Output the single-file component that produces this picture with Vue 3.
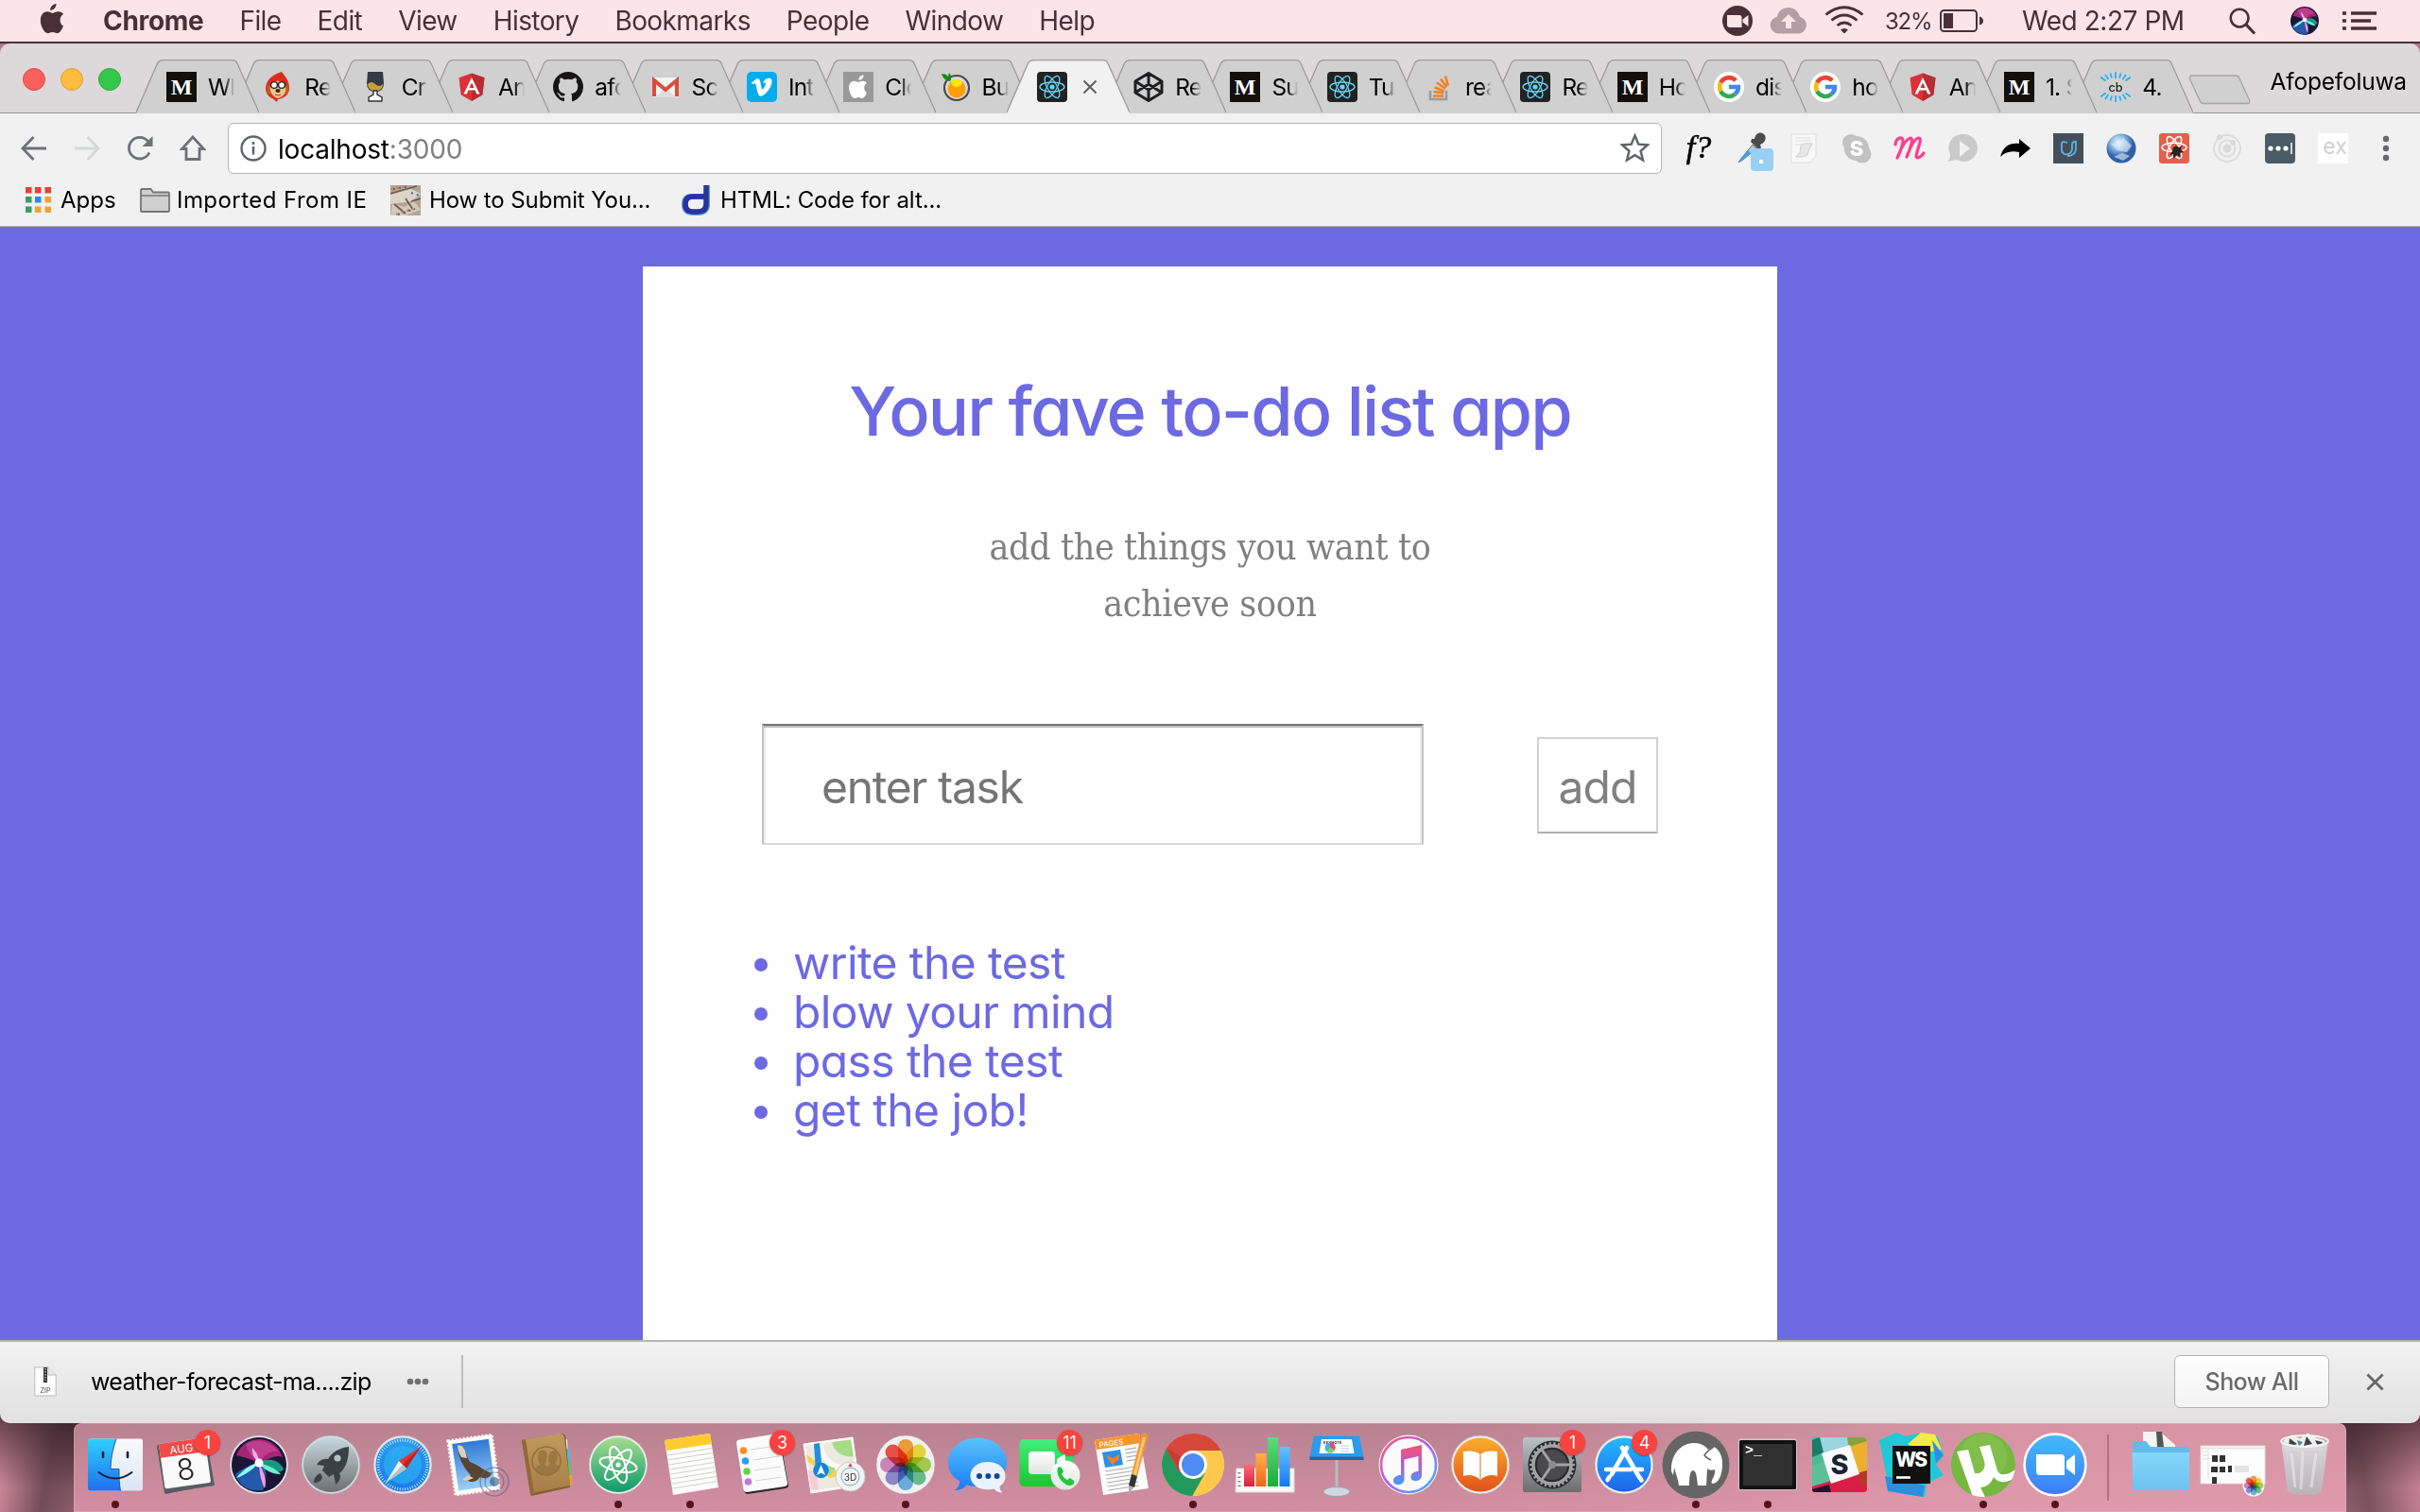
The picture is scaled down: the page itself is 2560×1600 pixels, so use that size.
<script setup>
const react = '<g fill="none" stroke="#61dafb" stroke-width="1.3"><ellipse cx="16" cy="16" rx="13" ry="5"/><ellipse cx="16" cy="16" rx="13" ry="5" transform="rotate(60 16 16)"/><ellipse cx="16" cy="16" rx="13" ry="5" transform="rotate(120 16 16)"/></g><circle cx="16" cy="16" r="2.6" fill="#61dafb"/>'

const fav = {
  medium: '<rect width="32" height="32" fill="#12100e"/><text x="16" y="24" text-anchor="middle" font-family="Liberation Serif, serif" font-weight="700" font-size="24" fill="#fff">M</text>',
  hound: '<path d="M20 0C10 3 3 9 3 18c0 5 4 9 7 10l5 4 1-3c8-1 12-6 12-12 0-7-4-12-8-17z" fill="#dd2c20"/><path d="M9 12c3-3 11-3 14 0 3 5 2 14-7 16-8-2-10-11-7-16z" fill="#f0c48f"/><path d="M7 15c-2 3-1 7 1 8M25 15c2 3 1 7-1 8" stroke="#b5651d" stroke-width="3" fill="none"/><circle cx="12" cy="14" r="3.4" fill="#fff" stroke="#222" stroke-width="1.4"/><circle cx="20" cy="14" r="3.4" fill="#fff" stroke="#222" stroke-width="1.4"/><ellipse cx="16" cy="20" rx="2.6" ry="2" fill="#3a2317"/><path d="M13 24q3 2 6 0" stroke="#a33" fill="none"/>',
  glass: '<path d="M8 0h16l1 12q0 9-9 9t-9-9z" fill="#333a44"/><path d="M8 13q4-4 8 0t8 0q0 7-8 7.500-8-1-8-7.500z" fill="#c6a03a"/><path d="M14 20h4v4l5 3v4H9v-4l5-3z" fill="#fff" stroke="#333" stroke-width="1.4"/>',
  angular: '<path d="M16 1.500l13.500 4.800-2.100 18L16 31 4.600 24.300l-2.100-18z" fill="#dd3139"/><path d="M16 1.500l13.500 4.800-2.100 18L16 31z" fill="#b52e31"/><path d="M16 6L7.500 23.500h3.200l1.700-4h7.200l1.700 4h3.200zm0 5.600l2.600 5.500h-5.200z" fill="#fff"/>',
  github: '<path transform="scale(2)" fill="#171515" d="M8 0C3.580 0 0 3.580 0 8c0 3.540 2.290 6.530 5.470 7.590.4.070.55-.17.55-.38 0-.19-.01-.82-.01-1.490-2.010.37-2.530-.49-2.690-.94-.09-.23-.48-.94-.82-1.130-.28-.15-.68-.52-.01-.53.63-.01 1.080.58 1.230.82.72 1.210 1.870.87 2.330.66.07-.52.28-.87.51-1.070-1.780-.2-3.640-.89-3.640-3.950 0-.87.31-1.590.82-2.150-.08-.2-.36-1.020.08-2.120 0 0 .67-.21 2.200.82.64-.18 1.320-.27 2-.27s1.360.09 2 .27c1.530-1.040 2.200-.82 2.200-.82.44 1.100.16 1.920.08 2.120.51.56.82 1.270.82 2.150 0 3.070-1.870 3.750-3.650 3.950.29.25.54.73.54 1.480 0 1.070-.01 1.930-.01 2.200 0 .21.15.46.55.38A8.010 8.010 0 0016 8c0-4.420-3.580-8-8-8z"/>',
  gmail: '<rect x="2" y="6" width="28" height="21" rx="2" fill="#f2f2f2"/><path d="M5 27l11-10 11 10z" fill="#ddd"/><path d="M4 26V9l12 10L28 9v17" fill="none" stroke="#dd4b3e" stroke-width="4"/>',
  vimeo: '<rect width="32" height="32" rx="5" fill="#00adef"/><path d="M5 11.500l5-4c3-1.500 4 1 4.600 4.500.7 4 1.200 6.500 2 6.500s3-3.500 3.200-5.200c.2-2-1.300-2-2.700-1.400 1.200-3.600 3.400-5.400 6.500-5.200 2.800.2 3.300 2.500 2.900 5-1 5.500-7.600 13.800-11.500 14-2.700 0-3.400-3.500-4.300-7-.8-3.500-1.200-6.500-2.200-6.500L6.300 13z" fill="#fff"/>',
  apple: '<rect width="32" height="32" fill="#999"/><path d="M21.500 3.500c.2 2.800-2.300 5.300-5 5.200-.3-2.700 2.300-5.200 5-5.200zM25 22c-1.500 3.200-3 6-5 6-1.500 0-2-.9-3.900-.9s-2.500.9-3.900.9c-2.700 0-6.200-6-6.200-11.200 0-4.500 2.800-7 5.600-7 1.800 0 3.200 1.200 4.400 1.200s2.800-1.300 5-1.200c1.600.1 3 .8 3.900 2.100-4 2.400-3.200 8.200.1 10.100z" fill="#fff"/>',
  bullet: '<circle cx="17" cy="17" r="13" fill="#d8d8d8" stroke="#4a4a4a" stroke-width="2.200"/><circle cx="17" cy="18" r="9.500" fill="#ff9e0c"/><ellipse cx="17" cy="12" rx="6" ry="4" fill="#ffe600"/><path d="M1 2q8 0 9 8Q3 9 1 2zM9 1q4 4 1 9-3-5-1-9z" fill="#138a13"/>',
  react: '<rect width="32" height="32" rx="4" fill="#222"/>' + react,
  codepen: '<path d="M16 1.500L30 10v12L16 30.500 2 22V10zM2 10l14 9 14-9M2 22l14-9 14 9M16 1.500V13M16 19v11.500" fill="none" stroke="#1e1f21" stroke-width="3" stroke-linejoin="round"/>',
  stack: '<path d="M7 20v9h17v-9" fill="none" stroke="#9a9c9f" stroke-width="2.600"/><path d="M10 25.500h11M10.300 21l10.800 1.500M11.500 16.500l10.200 4M14 11.500l9 6.200M18 7.500l6.500 8.500M23 4.500l3 10" stroke="#f48024" stroke-width="2.600"/>',
  google: '<circle cx="16" cy="16" r="16" fill="#fff"/><g fill="none" stroke-width="4.600"><path d="M23.200 9.200A9.900 9.900 0 0 0 7.200 11.500" stroke="#ea4335"/><path d="M7.200 11.500a9.900 9.900 0 0 0 0 9" stroke="#fbbc05"/><path d="M7.200 20.500a9.900 9.900 0 0 0 15.300 3" stroke="#34a853"/><path d="M22.500 23.500A9.500 9.500 0 0 0 25.900 16H16" stroke="#4285f4"/></g>',
  cb: '<g stroke="#1fb0f5" stroke-width="1.700"><path d="M16 0v7M10.500 1.500l1.500 5M21.500 1.500l-1.500 5M5 3l3.500 5M27 3l-3.500 5M0 5.500l5.500 4M32 5.500l-5.500 4M16 32v-7M10.500 30.500l1.500-5M21.500 30.500l-1.500-5M5 29l3.500-5M27 29l-3.500-5M0 26.500l5.500-4M32 26.500l-5.500-4"/></g><text x="16" y="20.500" text-anchor="middle" font-family="Inter, sans-serif" font-weight="500" font-size="12.500" fill="#222">cb</text>',
}

const tabs = [
  ['medium', 'Wh'], ['hound', 'Re'], ['glass', 'Cr'], ['angular', 'An'], ['github', 'afo'], ['gmail', 'Sc'], ['vimeo', 'Int'],
  ['apple', 'Clo'], ['bullet', 'Bu'], ['react', ''], ['codepen', 'Re'], ['medium', 'Su'], ['react', 'Tu'], ['stack', 'rea'],
  ['react', 'Re'], ['medium', 'Ho'], ['google', 'dis'], ['google', 'ho'], ['angular', 'An'], ['medium', '1. S'], ['cb', '4.'],
].map(([icon, label], i) => ({ icon, label, active: i === 9, z: i === 9 ? 40 : 30 - i }))

const menus = ['File', 'Edit', 'View', 'History', 'Bookmarks', 'People', 'Window', 'Help']

const extensions = [
  '<text x="17" y="26" text-anchor="middle" font-family="Liberation Serif, serif" font-style="italic" font-size="34" fill="#000" stroke="#000" stroke-width=".6">f?</text>',
  '<path d="M5 28L18 12l4 4L8 28l-5 3z" fill="#b9c4cc" stroke="#777"/><path d="M5 27l8-9 3 3-8 7-4 2z" fill="#3fa2e6"/><path d="M16 9l9 9 2-3-1-3c6-2 7-8 4-11-4-3-9-1-10 5h-3z" fill="#4b4b4b"/><rect x="16" y="16" width="24" height="24" rx="4" fill="#98cff5"/><rect x="25" y="28" width="4" height="4" fill="#fff"/>',
  '<path d="M3 1h26v23l-6 7H3z" fill="#f8f8f8" stroke="#ddd"/><path d="M7 5h17M7 8h17M7 12h10" stroke="#ddd"/><path d="M13 13q2-3 12-2-1 3-3 5l-2 7q-4 3-12 2 1-3 4-4z" fill="#e8e8e8" stroke="#cfcfcf"/>',
  '<circle cx="10" cy="10" r="9" fill="#c2c2c2"/><circle cx="22" cy="22" r="9.500" fill="#c2c2c2"/><circle cx="16" cy="16" r="13" fill="#c2c2c2"/><text x="16" y="24" text-anchor="middle" font-family="Inter, sans-serif" font-weight="800" font-size="22" fill="#fff">S</text>',
  '<path d="M1 12C2 4 9 3 9 8c0 6-4 14-6 18 4-10 9-20 14-21 4 0-1 13-4 20C17 14 22 5 26 5c5 1-6 20-2 21 3 0 5-2 7-5" fill="none" stroke="#ff3e8d" stroke-width="3.200" stroke-linecap="round" stroke-linejoin="round"/>',
  '<path d="M17 1a14.500 14.500 0 1 1-7 27L0 30q4-4 3-8A14.500 14.500 0 0 1 17 1z" fill="#c9c9c9"/><path d="M13 8l11 8-11 9z" fill="#f1f1f1"/>',
  '<path d="M0 25C3 14 10 10 20 11V6l12 10-12 10v-6C11 18 5 20 0 25z" fill="#000"/>',
  '<rect width="32" height="32" fill="#454f5b"/><path d="M15 10q-6-2-6 1v6c0 5 4 6 7 5 3-1 4-3 4-6v-5q0-2 4-2v7c0 6-5 8-9 8" fill="none" stroke="#5cb4e4" stroke-width="1.800"/>',
  '<defs><radialGradient id="gl" cx=".4" cy=".3"><stop offset="0" stop-color="#f0f8fd"/><stop offset=".5" stop-color="#8dbbe2"/><stop offset="1" stop-color="#2f5fa8"/></radialGradient></defs><circle cx="16" cy="16" r="15.500" fill="url(#gl)"/><path d="M4 10l8 2 6-7 9 8-5 7-10-2zM8 25l9-4 8 3-7 5z" fill="#e3eff9" opacity=".6"/>',
  '<rect width="32" height="32" rx="3" fill="#e2604c"/><g fill="none" stroke="#fff" stroke-width="1.500"><ellipse cx="16" cy="15" rx="13" ry="4.800"/><ellipse cx="16" cy="15" rx="13" ry="4.800" transform="rotate(60 16 15)"/><ellipse cx="16" cy="15" rx="13" ry="4.800" transform="rotate(120 16 15)"/></g><path d="M15 15q3-3 6 0l3-2-1 4 3 3-4 1 1 5-4-3-4 4v-5l-4 1 3-4z" fill="#2b2422"/>',
  '<circle cx="16" cy="16" r="14" fill="none" stroke="#dcdcdc" stroke-width="2"/><circle cx="16" cy="16" r="8.500" fill="none" stroke="#dcdcdc" stroke-width="2"/><circle cx="16" cy="16" r="4.500" fill="#d8d8d8"/><circle cx="8" cy="4" r="3" fill="#d8d8d8"/><circle cx="22" cy="10" r="3" fill="#d8d8d8"/>',
  '<rect width="32" height="32" rx="4" fill="#4b5b66"/><circle cx="6" cy="16" r="2.600" fill="#fff"/><circle cx="14" cy="16" r="2.600" fill="#fff"/><circle cx="22" cy="16" r="2.600" fill="#fff"/><path d="M28 10v12" stroke="#fff" stroke-width="1.500"/>',
  '<rect width="32" height="32" fill="#fff"/><text x="18" y="22" text-anchor="middle" font-family="Inter, sans-serif" font-size="23" fill="#d0d0d0">ex</text>',
]

const petals = (cx, cy, k) => ['#fb9a2d', '#f0e02c', '#a4d245', '#5fc28a', '#66aee6', '#8c83d0', '#d283c0', '#f4463c']
  .map((c, i) => `<rect x="${cx - 8 * k}" y="${cy - 27 * k}" width="${16 * k}" height="${27 * k}" rx="${8 * k}" fill="${c}" style="mix-blend-mode:multiply" opacity=".92" transform="rotate(${i * 45} ${cx} ${cy})"/>`).join('')
const ticks = (n, cx, cy, r1, r2, color, w) => Array.from({ length: n }, (_, i) => {
  const a = (i / n) * Math.PI * 2
  return `<path d="M${cx + r1 * Math.cos(a)} ${cy + r1 * Math.sin(a)}L${cx + r2 * Math.cos(a)} ${cy + r2 * Math.sin(a)}" stroke="${color}" stroke-width="${w}"/>`
}).join('')
const grad = (id, ...stops) => `<defs><linearGradient id="${id}" x1="0" y1="0" x2="0" y2="1">${stops.map((c, i) => `<stop offset="${i / (stops.length - 1)}" stop-color="${c}"/>`).join('')}</linearGradient></defs>`
const ring = (fill, rim = '#e6e6e8', r = 28.5) => `<circle cx="38" cy="44" r="31" fill="${rim}" stroke="#b79aa4" stroke-width=".6"/><circle cx="38" cy="44" r="${r}" fill="${fill}"/>`
const siri = (cx, cy, r) => `<g transform="translate(${cx} ${cy}) scale(${r / 29})"><circle r="29" fill="#1b1638"/><path d="M-24-10C-16-32 16-34 25-8 16-12 8-4 0-2-8-6-16-8-24-10z" fill="#d12c86" opacity=".75"/><path d="M-14-22C0-30 16-22 20-14 10-16 4-8 0-2-8-8-12-14-14-22z" fill="#e35bb0" opacity=".45"/><path d="M-25 10C-16 2-6 0 0-2 10 0 8 16 4 27-10 29-22 22-25 10z" fill="#2a70cf" opacity=".75"/><path d="M0-2C10-8 20-6 26 4 24 12 8 4 0-2z" fill="#1fc09c" opacity=".75"/><path d="M0-2C-6 4-12 10-24 14-16 4-6-2 0-2z" fill="#8bfbf5"/><path d="M0-2C8 0 18 4 23 10 12 10 4 4 0-2z" fill="#6ff0cf"/><path d="M0-2C4 6 9 16 6 25 2 18 0 6 0-2z" fill="#f79be6"/><path d="M0-2C-4-6-8-10-7-18-2-12 0-8 0-2z" fill="#f0b0e4"/><circle cy="-2" r="4.500" fill="#fff"/></g>`

const dock = [
  { run: true, svg: grad('fa', '#2fd0fd', '#1f6ff0') + grad('fb', '#fafafc', '#d9e6f5') + '<rect x="9" y="16.500" width="58" height="55" rx="2.500" fill="url(#fb)"/><path d="M11.500 16.500H39c-4 12-6 22-6 32h9c0 8 0 16 1.500 23h-32a2.500 2.500 0 0 1-2.500-2.500V19a2.500 2.500 0 0 1 2.500-2.500z" fill="url(#fa)"/><path d="M39 16.500c-4 12-6 22-6 32h9c0 8 0 16 1.500 23" fill="none" stroke="#1a4f96" stroke-width=".9"/><path d="M25 31v5M51 31v5" stroke="#14213a" stroke-width="2.600" stroke-linecap="round"/><path d="M20.500 52q17.500 13 35 0" fill="none" stroke="#14213a" stroke-width="2" stroke-linecap="round"/>' },
  { badge: '1', svg: '<path d="M6 24l6-3 48 42-5 4-40 8z" fill="#4c5258"/><path d="M6 24l8 50 53-8-8-46z" fill="#565d63"/><g transform="rotate(-8 38 42)"><rect x="11" y="18" width="49" height="48" rx="2" fill="#fafafa"/><path d="M11 33V20a2 2 0 0 1 2-2h45a2 2 0 0 1 2 2v13z" fill="#ee4c48"/><text x="34" y="30.500" text-anchor="middle" font-family="Inter, sans-serif" font-size="11.500" fill="#fff">AUG</text><text x="35.500" y="59.500" text-anchor="middle" font-family="Inter, sans-serif" font-weight="300" font-size="31" fill="#222">8</text></g>' },
  { svg: ring('#191a38') + siri(38, 44, 29) },
  { svg: grad('lp', '#c7d8df', '#6f6f70') + ring('url(#lp)', '#cfdde2', 29) + '<path d="M57 25c-10 1-18 6-22 13-5-1-9 1-12 6l8 1-2 5 7 7 5-3 2 11c5-4 6-8 4-12 7-5 10-15 10-28z" fill="#3b4044"/><circle cx="45" cy="37" r="3.600" fill="#b4c2c8"/><path d="M27 53c-5 2-7 6-7 10 5 0 8-2 9-6z" fill="#3b4044"/>' },
  { svg: grad('sf', '#2b9df2', '#1c7bea') + ring('url(#sf)') + '<circle cx="38" cy="44" r="20" fill="#30bdf2" opacity=".5"/>' + ticks(60, 38, 44, 24.5, 27.5, '#d8f0ff', 0.9) + '<path d="M57 25L34 40l8 8z" fill="#e8332f"/><path d="M20 63l14-23 8 8z" fill="#eceff2"/><path d="M57 25L38 44l4 4z" fill="#bb2420"/><path d="M20 63l18-19 4 4z" fill="#b9c0c8"/>' },
  { svg: grad('ml', '#2f78d8', '#9fd0f4') + '<g transform="rotate(-8 38 44)"><rect x="13.500" y="15" width="47" height="58" fill="#fff" stroke="#fff" stroke-width="2.600" stroke-dasharray="2.200 1.800"/><rect x="17.500" y="19" width="39" height="50" fill="url(#ml)"/></g><path d="M20 23l5 1 3 5c1 4 3 8 5 12l5 2c6 3 12 8 18 10-2 6-8 6-12 4-3 4-6 5-10 5l-6-2 6-5c-8-8-14-20-14-32z" fill="#5a4330"/><path d="M20 23l5 1 3 5 2 8-6-1c-3-5-4-9-4-13zM31 55l6 3-7 3-5-1z" fill="#d9cfc0"/><circle cx="59" cy="62" r="15" fill="none" stroke="#56657c" stroke-width="1.400" opacity=".6"/><circle cx="59" cy="62" r="10" fill="none" stroke="#56657c" stroke-width="1.200" opacity=".6"/><circle cx="59" cy="62" r="5" fill="#34517a" opacity=".6"/>' },
  { svg: grad('ct', '#c29a5e', '#a57d47') + '<path d="M54 18l6-1 1 22-5 1z" fill="#f3f3f3"/><path d="M56 28l7-1v14l-6 1z" fill="#4fb6dc"/><path d="M57 42l7-1v14l-6 1z" fill="#5bc467"/><path d="M58 56l7-1v10l-6 2z" fill="#eda42d"/><path d="M12 18L54 11q4 0 4.500 4L63 68 22 77z" fill="#83602f"/><path d="M14 17.500L52 11q4 0 5 4l6 51-40 8z" fill="url(#ct)"/><path d="M12 18l4-1 9 58-4 1z" fill="#8f6a38"/><circle cx="38" cy="40" r="15" fill="none" stroke="#93703c" stroke-width="1.600"/><path d="M26 50q1-5 6-6c-3-3-5-12 0-15 6-2 8 4 6 9 0 3-1 5-2 6l3 2 3-2c-3-4-3-14 3-15 5 0 7 8 2 14q4 1 5 5-12 11-26 2z" fill="#93703c" opacity=".75"/>' },
  { run: true, svg: grad('at', '#a7dc8f', '#0e9a6c') + ring('url(#at)', '#eef0ee', 29) + '<g fill="none" stroke="#fff" stroke-width="2"><ellipse cx="38" cy="44" rx="20" ry="7" transform="rotate(12 38 44)"/><ellipse cx="38" cy="44" rx="20" ry="7" transform="rotate(72 38 44)"/><ellipse cx="38" cy="44" rx="20" ry="7" transform="rotate(130 38 44)"/></g><circle cx="38" cy="44" r="2.600" fill="#fff"/>' },
  { run: true, svg: '<path d="M11 18l48-7 9 57-48 8z" fill="#fdfdfb"/><path d="M11 18l48-7 2 11-48 7z" fill="#fecb2f"/>' + [0, 1, 2, 3, 4, 5, 6, 7].map(i => `<path d="M${14 + i * 0.8} ${34 + i * 5}l47-7.500" stroke="#cfcfcf" stroke-width="1"/>`).join('') },
  { badge: '3', svg: '<path d="M12 22q0-3 3-3.500l38-6q3 0 4 3l9 50q0 3-3 3.500l-40 6q-3 0-3.500-3z" fill="#2a2a2e"/><path d="M11 21q0-3 3-3.500l38-6q3 0 4 3l9 49q0 3-3 3.500l-40 6q-3 0-3.500-3z" fill="#fbfbfb"/><path d="M26 28l28-4M28 39l28-4M30 50l28-4M31 61l28-4" stroke="#d4d4d4"/><circle cx="18.500" cy="29" r="3.800" fill="#fb8d25"/><circle cx="20.500" cy="40" r="3.800" fill="#22a4f3"/><circle cx="22" cy="51" r="3.800" fill="#63d543"/><circle cx="23.500" cy="62" r="3.800" fill="#c476e0"/>' },
  { svg: '<path d="M6 22l52-7 7 51-51 8z" fill="#f8f8f6" stroke="#fff"/><path d="M8 24l48-6.500 6.500 47-47.500 7z" fill="#ece9df"/><path d="M36 20l20-2.600 3 18C46 36 38 30 36 20z" fill="#a7dc87"/><path d="M26 22c4 18 14 24 35 23v8C38 56 24 40 20 22z" fill="#fbfaf5"/><path d="M9 33l24 18 29-5v6L34 58 10 40z" fill="#f9d04c"/><path d="M17 22l6-1 3 30h-7z" fill="#1f90dc"/><path d="M11 50h9l2 20-8 1z" fill="#f9cdd6"/><path d="M30 44l10 4-6 8z" fill="#a7dc87"/><circle cx="24.500" cy="50" r="8.300" fill="#1485d8"/><path d="M24.500 44l4.500 11-4.500-2.500-4.500 2.500z" fill="#fff"/><circle cx="55.500" cy="56.500" r="15.500" fill="#f3f3f3" stroke="#ccc"/><circle cx="55.500" cy="56.500" r="9.500" fill="none" stroke="#79a6bf"/><text x="55.500" y="60.500" text-anchor="middle" font-family="Inter, sans-serif" font-size="10" fill="#333">3D</text><path d="M55.500 42l2 4h-4z" fill="#e33"/>' },
  { run: true, svg: ring('#f0f0f1', '#fafafa', 30) + petals(38, 44, 1) },
  { svg: grad('ms', '#5ac2fb', '#1a7df8') + '<path d="M38 15.500c17 0 31 11 31 26S55 67 38 67c-4 0-8-.5-11-2-3 4-7 6-13 6 4-3 5-6 5-10C11 57 7 50 7 41.500c0-15 14-26 31-26z" fill="url(#ms)"/><path d="M49 41c11 0 18.500 6.500 18.500 15 0 5-2 8-6 11 0 3 1 5 3 6.500-4 0-7-1.500-9-4-2 .5-4 .8-6.500.8-11 0-18.500-6-18.500-14.500S38 41 49 41z" fill="#eaf3fc"/><circle cx="40" cy="56" r="3" fill="#12479a"/><circle cx="49.300" cy="56" r="3" fill="#12479a"/><circle cx="58.600" cy="56" r="3" fill="#12479a"/>' },
  { badge: '11', svg: grad('ft', '#43ef7e', '#1ac52c') + grad('fw', '#ffffff', '#dfe5df') + '<rect x="6.500" y="17" width="57" height="50" rx="5" fill="url(#ft)"/><rect x="16" y="30" width="28" height="24" rx="4" fill="url(#fw)"/><path d="M46 38l9-6v20l-9-6z" fill="#f3f3f3"/><circle cx="55" cy="55" r="15.500" fill="url(#fw)"/><path d="M47 47q3-2 5 2l1 2-2 3q2 4 6 6l3-2 4 3q1 3-2 4.500-5 2-11-4.500t-4-14z" fill="#1fc838"/>' },
  { svg: '<path d="M10 18l47-7 10 58-48 7z" fill="#fbfbfb"/><path d="M10 18l47-7 2 10-47 7z" fill="#f99527"/><text x="15" y="26" transform="rotate(-8 15 26)" font-family="Inter, sans-serif" font-size="8" font-weight="500" fill="#fff">PAGES</text><path d="M18 31l19-3 3 16-19 3z" fill="#2f8fe8"/><path d="M22 34l7 3 7-4-1 6-5 3v3l-3-3z" fill="#f58220"/>' + [0, 1, 2, 3].map(i => `<path d="M${42 + i * 0.7} ${28 + i * 4}l12-2" stroke="#888" stroke-width=".8"/>`).join('') + [0, 1, 2, 3, 4, 5].map(i => `<path d="M${21 + i * 0.7} ${51 + i * 4}l32-5" stroke="#999" stroke-width=".8"/>`).join('') + '<path d="M59 14q1-4 5-3 3 1 2 5L55 56l-6-2z" fill="#f0952d"/><path d="M61 15l3 0-10 40-3-1z" fill="#fcc67a"/><path d="M49 54l6 2-3 12-6-2z" fill="#333"/><path d="M46 66l5 2-5 8z" fill="#a9b0b8"/>' },
  { run: true, svg: '<circle cx="38" cy="44" r="33" fill="#fdc94c"/><path d="M38 44L9.400 27.500A33 33 0 0 1 67.500 29z" fill="#d6483c"/><path d="M38 11a33 33 0 0 1 29.500 18H38z" fill="#d6483c"/><path d="M9.400 27.500A33 33 0 0 0 37.500 77L51 53 38 44z" fill="#229a5b"/><path d="M9.400 27.500L23 52l15-8V29z" fill="#d6483c"/><path d="M10 26.500L24 51l7-12z" fill="#c13d33"/><path d="M38 29h29.500a33 33 0 0 1-30 48l14-25z" fill="#fdc94c"/><circle cx="38" cy="44" r="15" fill="#fff"/><circle cx="38" cy="44" r="12" fill="#4e8bf4"/>' },
  { svg: grad('nr', '#ff6b79', '#d6203c') + grad('no', '#ffb347', '#f0641d') + grad('ng', '#5fdc7e', '#17ad33') + grad('nb', '#5fc4ff', '#1479f2') + '<path d="M8 48h61v25H7z" fill="#f8f8f8" stroke="#ddd"/><path d="M11 52v18" stroke="#888" stroke-dasharray="1.500 3" stroke-width="3"/><rect x="16" y="44" width="11" height="23" fill="url(#nr)"/><rect x="28.500" y="32" width="11" height="35" fill="url(#no)"/><rect x="41" y="15" width="11" height="52" fill="url(#ng)"/><rect x="53.500" y="25" width="11" height="42" fill="url(#nb)"/>' },
  { svg: '<rect x="36.500" y="38" width="3" height="36" fill="#b9bcc2"/><ellipse cx="38" cy="72.500" rx="14" ry="5" fill="#cfd8e2" stroke="#9aa5b3"/><path d="M14 13.500h48l4.500 22h-57z" fill="#2b9ceb"/><path d="M9.500 35.500h57v3.500h-57z" fill="#1367b4"/><path d="M22 17h32l2.500 15h-37z" fill="#fff"/><text x="24" y="21.500" font-family="Inter, sans-serif" font-size="4" font-weight="700" fill="#333">KEYNOTE</text><circle cx="31" cy="26" r="5.500" fill="#3fb1f0"/><path d="M31 26v-5.500a5.500 5.500 0 0 1 5 8z" fill="#ef4c6a"/><path d="M31 26l5 2.500a5.500 5.500 0 0 1-9 1z" fill="#7bd653"/><path d="M42 24h9M42 27h9M42 30h9" stroke="#bcd" stroke-width="1.200"/>' },
  { svg: '<defs><linearGradient id="it" x1="0" y1="0" x2="1" y2="1"><stop offset="0" stop-color="#fb5a72"/><stop offset=".5" stop-color="#b55cf0"/><stop offset="1" stop-color="#30c3fb"/></linearGradient></defs>' + grad('iu', '#fb5268', '#b85ad8', '#3ba1f8') + '<circle cx="38" cy="44" r="31.500" fill="#f5f5f7"/><circle cx="38" cy="44" r="29" fill="#fbfbfd" stroke="url(#it)" stroke-width="2.600"/><path d="M30 28l22-5v32c0 4-3 6-6.500 6S40 59 40.500 56s4-5 8-5V35l-15 3.500V59c0 4-3 6-6.500 6S21.500 63 22 60s4-5 8-5z" fill="url(#iu)"/>' },
  { svg: grad('ib', '#fcae2d', '#e2501a') + ring('url(#ib)', '#ececec') + '<path d="M38 33c-5-4-12-4-18-3v26c6-2 13-1 18 4 5-5 12-6 18-4V30c-6-1-13-1-18 3z" fill="#fff"/><path d="M38 33v26" stroke="#e88a3a" stroke-width="1.200"/>' },
  { badge: '1', svg: grad('sp', '#b9c3c8', '#6d6d6e') + '<rect x="7" y="15" width="62" height="58" rx="2.500" fill="url(#sp)"/><circle cx="38" cy="44" r="25.500" fill="#2c2c2e"/><circle cx="38" cy="44" r="20" fill="none" stroke="#a3a3a6" stroke-width="3.500"/>' + ticks(30, 38, 44, 20, 24, '#a3a3a6', 2.2) + '<circle cx="38" cy="44" r="16" fill="#4a4a4c"/><path d="M38 44L27 28M38 44l19 0M38 44L27 60" stroke="#a3a3a6" stroke-width="3"/><circle cx="38" cy="44" r="4" fill="#8c8c8f"/>' },
  { badge: '4', svg: grad('as', '#27b9fb', '#1d63ec') + ring('url(#as)', '#eee') + '<g stroke="#fff" stroke-width="4.600" stroke-linecap="round"><path d="M41 26L25 54M36 26l18 31M19 49h26M50 49h7"/><path d="M22.500 57l-2 3M55 58l1.500 2.500"/></g>' },
  { run: true, svg: '<circle cx="38" cy="44" r="35.500" fill="#656565"/><path d="M12 51c-1-16 8-30 25-30 6 0 11 3 14 7l6-3c6 3 9 10 9 18 0 10-3 21-11 21-2-4 4-7 3-15-3 1-6 1-8-1l-1 18h-9c-1-6-1-16-5-16s-4 11-4 16H20c-1-7-3-12-5-19l-1 8z" fill="#fff"/><path d="M57 25c-3 2-8 5-10 9 2 3 5 4 7 5" fill="none" stroke="#656565" stroke-width="1.600"/>' },
  { run: true, svg: '<rect x="7" y="16.500" width="62" height="54.500" rx="2.500" fill="#c9c9c9"/><rect x="8" y="18" width="60" height="52" rx="1.500" fill="#111"/><rect x="12" y="22" width="52" height="44" fill="#303030"/><text x="14" y="33" font-family="Liberation Mono, monospace" font-weight="700" font-size="15" fill="#fff">&gt;_</text>' },
  { svg: '<rect x="9" y="15" width="58" height="58" rx="3" fill="#fff"/><path d="M12 15h35l5 16-43 14V18q0-3 3-3z" fill="#9ad5e0"/><path d="M9 15h7l15 54-12 4-7 0q-3 0-3-3z" fill="#3eb489" opacity=".85"/><path d="M9 18l8-3 4 16-12 5z" fill="#1c7a66"/><path d="M46 15h18q3 0 3 3v5l-19 6z" fill="#8aa03a"/><path d="M48 25l19-6v36l-10 3z" fill="#ecb02e"/><path d="M9 67l58-17v20q0 3-3 3H12q-3 0-3-3z" fill="#d81e46"/><path d="M9 70l18-5 2 8H12q-3 0-3-3z" fill="#2b0f2c"/><path d="M57 54l10-3v14l-6 2z" fill="#b33a25"/><path d="M19 32l30-9 10 31-30 10z" fill="#fafafa"/><text x="38" y="54" text-anchor="middle" font-family="Inter, sans-serif" font-weight="800" font-size="29" fill="#1c2330">S</text>' },
  { svg: '<path d="M4 18l18-8 10 4 12-3 22 3 6 20-8 10 8 11-18 9-2 14-37-6z" fill="#1fc9d6"/><path d="M10 56l42 10-2 12-37-6z" fill="#2a8fe0"/><path d="M34 22l14-12 15 2 7 16-10 2H46z" fill="#f4ea4a"/><path d="M60 18l12 16-8 8z" fill="#2f8fe0"/><rect x="18" y="24" width="40" height="40" fill="#101010"/><text x="38" y="46" text-anchor="middle" font-family="Inter, sans-serif" font-weight="800" font-size="21" fill="#fff" textLength="34">WS</text><path d="M22 57.500h15" stroke="#fff" stroke-width="2.600"/>' },
  { run: true, svg: '<clipPath id="utc"><circle cx="38" cy="44" r="34"/></clipPath><circle cx="38" cy="44" r="34" fill="#76b740"/><circle cx="38" cy="36" r="25" fill="#8cc557" opacity=".5"/><path clip-path="url(#utc)" d="M10 30l12-2 7 25c8 1 12-5 10-13l-5-15 11-2 7 24c1 5 4 8 8 7 4 0 8-2 12-5v8c-7 6-17 8-23 0-3 7-8 11-14 11l6 12-14-2z" fill="#fff"/>' },
  { run: true, svg: grad('zm', '#42bbfd', '#3d7ef8') + ring('url(#zm)', '#fff', 31) + '<circle cx="38" cy="44" r="32.500" fill="none" stroke="#fff" stroke-width="2.400"/><path d="M18 33h26q4 0 4 4v18H22q-4 0-4-4z" fill="#fff"/><path d="M50 40l9-7v22l-9-7z" fill="#fff"/>' },
]

const stacks = [
  grad('fo', '#86d6fb', '#6cc3ee') + '<path d="M19 9h18l16 14v14H19z" fill="#f4f4f4"/><path d="M33 9h6l2 16h-7z" fill="#555"/><path d="M8 23q0-4 4-4h10l5 6h36q5 0 5 5v39q0 2-2 2H10q-2 0-2-2z" fill="#61bce9"/><path d="M7.500 31h60.500v38q0 2-2 2H10q-2 0-2-2z" fill="url(#fo)"/>',
  '<rect x="4" y="24" width="68" height="40" fill="#fdfdfd" stroke="#ddd"/><path d="M4 26.500h68" stroke="#e5e5e5" stroke-width="2"/><path d="M12 28v30M6 30h5M6 34h5M6 38h5" stroke="#ddd"/><g fill="#333"><rect x="16" y="34" width="6" height="7"/><rect x="24" y="34" width="6" height="7"/><rect x="15" y="46" width="7" height="6"/><rect x="24" y="46" width="6" height="6"/><rect x="33" y="45" width="4" height="7"/><rect x="16" y="57" width="5" height="7"/></g><rect x="40" y="45" width="15" height="7" fill="#e4e4e4"/><circle cx="60" cy="66" r="11.500" fill="#f3f3f3"/>' + petals(60, 66, 0.38),
  grad('tr', '#dcdcde', '#b9b5b8') + '<path d="M15 18l10-6 8 4 8-6 9 5 10 3-3 12H18z" fill="#efefef" stroke="#aaa" stroke-width=".8"/><path d="M22 16l8 6-9 3zM40 14l6 8-9 2zM49 18l8 2-4 6z" fill="#444"/><path d="M30 18l6 2-4 5z" fill="#3f9b8c"/><path d="M13 18c14 8 37 8 50 0l-7 54c-4 5-32 5-36 0z" fill="url(#tr)" opacity=".92"/><ellipse cx="38" cy="19" rx="25" ry="6" fill="none" stroke="#f6f6f6" stroke-width="1.800"/><path d="M24 32l4 36M36 30l-2 40M50 32l-5 36" stroke="#f3f1f2" stroke-width="3" opacity=".5"/>',
]

const menuSiri = siri(16, 16, 15)
const todos = ['write the test', 'blow your mind', 'pass the test', 'get the job!']
</script>

<template>
  <div class="screen">
    <header class="menubar">
      <svg class="apple" viewBox="0 0 26 32"><path d="M17.500 0c.3 3.500-3 7-6.300 6.900C10.800 3.500 14.200.2 17.500 0zM25 23.500c-1.800 4.300-4 7.700-6.400 7.700-2 0-2.600-1.200-5-1.200s-3.100 1.200-5 1.200C5 31.200.8 24 .8 17.600.8 11.500 4.500 8.300 8.200 8.300c2.300 0 4.200 1.600 5.600 1.600s3.500-1.700 6.300-1.600c2.100.1 3.800 1 4.900 2.700-5 3.100-4.200 10.200 0 12.500z" fill="#4a2f38" /></svg>
      <nav class="menus">
        <b>Chrome</b>
        <span v-for="m in menus" :key="m">{{ m }}</span>
      </nav>
      <div class="status">
        <svg class="s-zoom" viewBox="0 0 32 32"><circle cx="16" cy="16" r="16" fill="#4a2f38" /><path d="M5 10h13q2.500 0 2.500 2.500V23H8q-3 0-3-3zM21.500 14.500l6-4.500v12l-6-4.500z" fill="#fde4ea" /></svg>
        <svg class="s-cloud" viewBox="0 0 40 28"><path d="M9 27.500a9 9 0 0 1-1-17.800C9 3.500 14 0 20 0s10.500 3.600 12 9.800A9 9 0 0 1 31 27.500z" fill="#b69da5" /><path d="M20 7l8 8h-5v7h-6v-7h-5z" fill="#fde4ea" /></svg>
        <svg class="s-wifi" viewBox="0 0 42 30"><g fill="none" stroke="#4a2f38" stroke-width="2.800"><path d="M1.500 9.500Q21-6 40.500 9.500" /><path d="M7.500 15.500Q21 4.500 34.500 15.500" /><path d="M13.500 21Q21 15 28.500 21" /></g><path d="M17 25.500Q21 22.500 25 25.500L21 29.500z" fill="#4a2f38" /></svg>
        <span class="pct">32%</span>
        <svg class="s-batt" viewBox="0 0 46 24"><rect x="1" y="1" width="38" height="22" rx="3.500" fill="none" stroke="#4a2f38" stroke-width="2" /><rect x="4" y="4" width="10" height="16" fill="#4a2f38" /><path d="M42 7.500q4 1 4 4.500t-4 4.500z" fill="#4a2f38" /></svg>
        <span class="clock">Wed 2:27 PM</span>
        <svg class="s-search" viewBox="0 0 30 30"><circle cx="11.500" cy="11.500" r="9.700" fill="none" stroke="#4a2f38" stroke-width="2.600" /><path d="M18.500 18.500L28 28.500" stroke="#4a2f38" stroke-width="3.200" /></svg>
        <svg class="s-siri" viewBox="0 0 32 32" v-html="menuSiri"></svg>
        <svg class="s-list" viewBox="0 0 36 20"><path d="M0 2h4M0 10h4M0 18h4M9 2h27M9 10h21M9 18h27" stroke="#4a2f38" stroke-width="3.600" /></svg>
      </div>
    </header>

    <section class="window">
      <div class="tabstrip">
        <div class="lights"><i class="red"></i><i class="amber"></i><i class="green"></i></div>
        <div class="tabs">
          <div v-for="(t, i) in tabs" :key="i" class="tab" :style="{ zIndex: t.z }">
            <svg class="tabshape" viewBox="0 0 130 57">
              <path d="M0 57L22.500 4Q24.500.7 28 .7H102Q105.500.7 107 4L130 57z" :fill="t.active ? '#f1f1f1' : '#d0d0d0'" />
              <path d="M0 56L22.500 4Q24.500.7 28 .7H102Q105.500.7 107 4L130 56" fill="none" stroke="#9b9b9b" stroke-width="1.300" />
            </svg>
            <svg class="favicon" viewBox="0 0 32 32" v-html="fav[t.icon]"></svg>
            <svg v-if="t.active" class="close" viewBox="0 0 16 16"><path d="M1.500 1.500l13 13M14.500 1.500l-13 13" stroke="#5f5f5f" stroke-width="2" /></svg>
            <span v-else class="tablabel">{{ t.label }}</span>
          </div>
        </div>
        <svg class="newtab" viewBox="0 0 66 32"><path d="M4 1h46q3 0 4 3l10.500 23q1 3.500-2 3.500H16q-3 0-4-3L1.500 4.500Q.8 1 4 1z" fill="#d0d0d0" stroke="#a5a5a5" stroke-width="1.300" /></svg>
        <span class="profile">Afopefoluwa</span>
      </div>

      <div class="toolbar">
        <svg class="nav-icon" viewBox="0 0 28 28"><path d="M27 14H2M13.500 2L2 14l11.500 12" fill="none" stroke="#6e7175" stroke-width="2.800" /></svg>
        <svg class="nav-icon" viewBox="0 0 28 28"><path d="M1 14h25M14.500 2L26 14 14.500 26" fill="none" stroke="#d6d7d8" stroke-width="2.800" /></svg>
        <svg class="nav-icon" viewBox="0 0 28 28"><path d="M24 18.500A11.300 11.300 0 1 1 22.500 6.500" fill="none" stroke="#6e7175" stroke-width="2.800" /><path d="M27.500 1v11H16.500z" fill="#6e7175" /></svg>
        <svg class="nav-icon" viewBox="0 0 28 28"><path d="M14 2L2.500 14.500H7V25.500H21V14.500h4.500z" fill="none" stroke="#6e7175" stroke-width="2.800" /></svg>
        <div class="omnibox">
          <svg class="info" viewBox="0 0 28 28"><circle cx="14" cy="14" r="12.500" fill="none" stroke="#616468" stroke-width="2.400" /><path d="M14 12v8.500M14 7v3" stroke="#616468" stroke-width="2.600" /></svg>
          <span class="url">localhost<em>:3000</em></span>
          <svg class="star" viewBox="0 0 30 30"><path d="M15 2.500l3.700 8.800 9.300.7-7.100 6.200 2.300 9.300L15 22.500l-8.200 5 2.300-9.300L2 12l9.300-.7z" fill="none" stroke="#616468" stroke-width="2.400" /></svg>
        </div>
        <div class="extensions">
          <svg v-for="(e, i) in extensions" :key="i" viewBox="0 0 32 32" v-html="e"></svg>
          <svg viewBox="0 0 32 32"><g fill="#66696d"><circle cx="16" cy="6" r="3.200" /><circle cx="16" cy="16" r="3.200" /><circle cx="16" cy="26" r="3.200" /></g></svg>
        </div>
      </div>

      <div class="bookmarks">
        <svg class="apps" viewBox="0 0 27 27"><g fill="#ea3f38"><rect width="6.500" height="6.500" /><rect x="10" width="6.500" height="6.500" /><rect x="20.500" width="6.500" height="6.500" /></g><g fill="#35a160"><rect y="10" width="6.500" height="6.500" /><rect y="20.500" width="6.500" height="6.500" /></g><rect x="10" y="10" width="6.500" height="6.500" fill="#2f86f2" /><g fill="#eda32f"><rect x="20.500" y="10" width="6.500" height="6.500" /><rect x="10" y="20.500" width="6.500" height="6.500" /><rect x="20.500" y="20.500" width="6.500" height="6.500" /></g></svg>
        <span class="b1">Apps</span>
        <svg class="folder" viewBox="0 0 32 26"><path d="M1 24V2.500Q1 1 2.500 1h9L14 4.500h16q1 0 1 1.500v18q0 1-1 1H2q-1 0-1-1z" fill="#cfcfcf" stroke="#757575" stroke-width="1.800" /><path d="M1 8h30" stroke="#757575" stroke-width="1.600" /></svg>
        <span class="b2">Imported From IE</span>
        <svg class="photo" viewBox="0 0 32 32"><rect width="32" height="32" fill="#b3a596" /><path d="M0 9L20 3l12 6-9 8-23 3z" fill="#ddd4c8" /><path d="M2 20l13 3 10-6 7 9-16 6H0z" fill="#d3c9bb" /><path d="M0 9L28 1M4 20l12 10M16 14l8 12M22 17l10-3" stroke="#6f5b50" stroke-width="1.800" /><path d="M0 4l18-3M6 31l18-6" stroke="#d9824e" stroke-width="2.400" stroke-dasharray="3 3" /><path d="M3 4l18-3M8 31l18-6M22 8l9 3" stroke="#54657e" stroke-width="2" stroke-dasharray="2 4" /></svg>
        <span class="b3">How to Submit You...</span>
        <svg class="dlogo" viewBox="0 0 32 32"><path d="M27 0v20q0 9-10 9H12Q3 29 3 20t9-8h15" fill="none" stroke="#5f9bd6" stroke-width="6" /><path d="M26 0v20q0 8-9 8h-5q-8 0-8-8t8-8h14" fill="none" stroke="#27349b" stroke-width="5.500" /></svg>
        <span class="b4">HTML: Code for alt...</span>
      </div>

      <main class="page">
        <div class="card">
          <h1>Your fave to-do list app</h1>
          <p>add the things you want to<br>achieve soon</p>
          <div class="form">
            <div class="field">enter task</div>
            <button type="button">add</button>
          </div>
          <ul>
            <li v-for="t in todos" :key="t">{{ t }}</li>
          </ul>
        </div>
      </main>

      <footer class="downloads">
        <svg class="zip" viewBox="0 0 24 32"><path d="M.8.800H15L23.200 9v22H.8z" fill="#fdfdfd" stroke="#bbb" stroke-width="1" /><path d="M15 .8V9h8" fill="#e9e9e9" stroke="#bbb" /><rect x="10" y="1" width="4" height="16" fill="#333" /><path d="M12 2v13" stroke="#bbb" stroke-dasharray="1.500 1.500" stroke-width="1.500" /><text x="12" y="27.500" text-anchor="middle" font-family="Inter, sans-serif" font-size="7" fill="#444">ZIP</text></svg>
        <span class="fname">weather-forecast-ma....zip</span>
        <svg class="dots" viewBox="0 0 24 8"><g fill="#707070"><circle cx="4" cy="4" r="3.300" /><circle cx="12" cy="4" r="3.300" /><circle cx="20" cy="4" r="3.300" /></g></svg>
        <i class="rule"></i>
        <button type="button" class="showall">Show All</button>
        <svg class="dismiss" viewBox="0 0 20 20"><path d="M1.500 1.500l17 17M18.500 1.500l-17 17" stroke="#666" stroke-width="3" /></svg>
      </footer>
    </section>

    <div class="desktop">
      <div class="dock">
        <div v-for="(d, i) in dock" :key="i" class="cell">
          <svg viewBox="0 0 76 94" v-html="d.svg"></svg>
          <i v-if="d.run" class="running"></i>
          <span v-if="d.badge" class="badge">{{ d.badge }}</span>
        </div>
        <div class="divider"></div>
        <div v-for="(s, i) in stacks" :key="'s' + i" class="cell">
          <svg viewBox="0 0 76 94" v-html="s"></svg>
        </div>
      </div>
    </div>
  </div>
</template>

<style>
body {
  background: #3c2a32;
}
</style>

<style scoped>
* {
  box-sizing: border-box;
}
svg {
  display: block;
  flex: none;
}
.screen {
  width: 2560px;
  height: 1600px;
  overflow: hidden;
  display: flex;
  flex-direction: column;
  background: #b0788a;
  font-family: Inter, "Liberation Sans", sans-serif;
  white-space: nowrap;
}
.menubar {
  height: 46px;
  flex: none;
  display: flex;
  align-items: center;
  padding: 0 46px 0 42px;
  background: #fde4ea;
  border-bottom: 2px solid #4a2f38;
  color: #4a2f38;
  font-size: 28px;
}
.apple {
  width: 26px;
  height: 32px;
  margin-top: -4px;
}
.menus {
  display: flex;
  gap: 38px;
  margin-left: 41px;
  letter-spacing: -0.58px;
}
.menus b {
  letter-spacing: -0.3px;
}
.status {
  margin-left: auto;
  display: flex;
  align-items: center;
}
.s-zoom { width: 32px; height: 32px; }
.s-cloud { width: 40px; height: 28px; margin-left: 18px; }
.s-wifi { width: 42px; height: 30px; margin-left: 18px; margin-top: -3px; }
.pct { width: 50px; margin-left: 22px; font-size: 24px; letter-spacing: -1.2px; }
.s-batt { width: 46px; height: 24px; margin-left: 8px; }
.clock { width: 173px; margin-left: 41px; letter-spacing: -0.45px; }
.s-search { width: 29px; height: 29px; margin-left: 46px; }
.s-siri { width: 32px; height: 32px; margin-left: 35px; }
.s-list { width: 36px; height: 20px; margin-left: 24px; }

.window {
  height: 1460px;
  flex: none;
  display: flex;
  flex-direction: column;
  border-radius: 10px;
  overflow: hidden;
  position: relative;
  z-index: 2;
}
.tabstrip {
  height: 74px;
  flex: none;
  display: flex;
  align-items: flex-end;
  background: #ddd8da;
  border-bottom: 1.5px solid #9b9b9b;
}
.lights {
  display: flex;
  gap: 16px;
  width: 144px;
  padding: 0 0 23px 24px;
  flex: none;
}
.lights i {
  width: 24px;
  height: 24px;
  border-radius: 50%;
}
.red { background: #fc605b; border: 1px solid #df4744; }
.amber { background: #fdbc40; border: 1px solid #de9f34; }
.green { background: #34c84a; border: 1px solid #27aa35; }
.tabs {
  display: flex;
  flex: none;
  margin-bottom: -1px;
}
.tab {
  position: relative;
  width: 130px;
  height: 57px;
  margin-right: -27.7px;
  flex: none;
  display: flex;
  align-items: center;
  padding-left: 32px;
}
.tabshape {
  position: absolute;
  left: 0;
  top: 0;
  width: 130px;
  height: 57px;
}
.favicon {
  position: relative;
  width: 32px;
  height: 32px;
}
.close {
  position: relative;
  width: 16px;
  height: 16px;
  margin-left: 16px;
}
.tablabel {
  position: relative;
  width: 28px;
  margin-left: 12px;
  overflow: hidden;
  font-size: 24.5px;
  letter-spacing: -0.8px;
  mask-image: linear-gradient(90deg, #000 60%, transparent 100%);
}
.newtab {
  width: 66px;
  height: 32px;
  margin: 0 0 8px 22px;
}
.profile {
  margin: 0 0 18px 21px;
  font-size: 24.5px;
  letter-spacing: -0.2px;
}

.toolbar {
  height: 72px;
  flex: none;
  display: flex;
  align-items: center;
  background: #f1f1f1;
  padding: 1px 0 0 22px;
}
.nav-icon {
  width: 28px;
  height: 28px;
  margin-right: 28px;
}
.omnibox {
  width: 1517px;
  height: 54px;
  flex: none;
  margin-left: -5px;
  display: flex;
  align-items: center;
  background: #fff;
  border: 1.5px solid #b4b4b4;
  border-radius: 6px;
  padding: 0 12px 0 12px;
}
.info { width: 28px; height: 28px; }
.url {
  margin: 2px 0 0 12px;
  font-size: 28px;
  letter-spacing: -0.2px;
}
.url em {
  font-style: normal;
  color: #808080;
}
.star { width: 31px; height: 31px; margin-left: auto; }
.extensions {
  display: flex;
  gap: 24px;
  margin-left: 22px;
}
.extensions svg {
  width: 32px;
  height: 32px;
  overflow: visible;
}

.bookmarks {
  height: 48px;
  flex: none;
  display: flex;
  align-items: center;
  padding: 0 0 8px 27px;
  background: #f1f1f1;
  border-bottom: 1.5px solid #b6b4b6;
  font-size: 24px;
}
.bookmarks span { flex: none; }
.apps { width: 27px; height: 27px; }
.b1 { width: 60px; margin-left: 10px; }
.folder { width: 32px; height: 26px; margin-left: 24px; }
.b2 { width: 202px; margin-left: 7px; letter-spacing: 0.45px; }
.photo { width: 32px; height: 32px; margin-left: 24px; }
.b3 { width: 235px; margin-left: 9px; letter-spacing: -0.1px; }
.dlogo { width: 32px; height: 32px; margin-left: 32px; }
.b4 { margin-left: 9px; letter-spacing: -0.1px; }

.page {
  height: 1178px;
  flex: none;
  display: flex;
  justify-content: center;
  background: #6c69e3;
  padding-top: 42px;
}
.card {
  width: 1200px;
  background: #fff;
  display: flex;
  flex-direction: column;
  color: #6c69e3;
  font-feature-settings: "cv11", "ss03";
}
h1 {
  margin: 113px 0 0;
  font-size: 72px;
  line-height: 80px;
  font-weight: 550;
  text-align: center;
  letter-spacing: -1.9px;
}
p {
  margin: 74px 0 0;
  font-family: "DejaVu Serif Condensed", "DejaVu Serif", serif;
  font-stretch: condensed;
  font-size: 39px;
  line-height: 60px;
  letter-spacing: -0.35px;
  text-align: center;
  color: #808080;
}
.form {
  display: flex;
  align-items: center;
  margin: 97px 0 0 126px;
  font-feature-settings: normal;
}
.field {
  width: 700px;
  height: 128px;
  padding: 5px 0 0 61px;
  line-height: 120px;
  border: 2px solid #c4c4c4;
  border-top-color: #757575;
  border-bottom-color: #dadada;
  box-shadow: inset 0 2px 0 #bdbdbd, inset 2px 0 0 #ededed, inset -2px 0 0 #ededed;
  font-size: 48px;
  letter-spacing: -1.3px;
  color: #757575;
}
.form button {
  width: 128px;
  height: 102px;
  margin: 2px 0 0 120px;
  padding: 3px 0 0;
  background: #fff;
  border: 2px solid #d2d2d2;
  border-bottom-color: #aeaeae;
  font-family: inherit;
  font-size: 48px;
  letter-spacing: -0.9px;
  color: #808080;
}
ul {
  margin: 99px 0 0;
  padding: 0 0 0 118px;
  list-style: none;
}
li {
  display: flex;
  align-items: center;
  gap: 27px;
  font-size: 48px;
  line-height: 52px;
  letter-spacing: -0.6px;
}
li::before {
  content: "";
  width: 14px;
  height: 14px;
  margin-top: 4px;
  border-radius: 50%;
  background: #6c69e3;
}

.downloads {
  height: 88px;
  flex: none;
  display: flex;
  align-items: center;
  padding: 0 38px 2px 36px;
  background: linear-gradient(#f2f2f2, #e1e1e1);
  border-top: 2px solid #b4b4b4;
  font-size: 25px;
}
.zip { width: 24px; height: 32px; }
.fname { width: 300px; margin-left: 36px; letter-spacing: -0.68px; }
.dots { width: 24px; height: 8px; margin-left: 34px; }
.rule { width: 1.5px; height: 56px; margin-left: 34px; background: #bcbcbc; }
.showall {
  width: 164px;
  height: 56px;
  margin-left: auto;
  padding: 0;
  background: linear-gradient(#fff, #f3f3f3);
  border: 1.5px solid #b4b4b4;
  border-radius: 6px;
  font-family: inherit;
  font-size: 25px;
  font-weight: 500;
  letter-spacing: -0.6px;
  color: #6b6b6b;
}
.dismiss { width: 19px; height: 19px; margin-left: 39px; }

.desktop {
  height: 104px;
  flex: none;
  display: flex;
  justify-content: center;
  margin-top: -10px;
  padding-top: 10px;
  background:
    linear-gradient(rgba(50, 28, 36, 0.75), rgba(50, 28, 36, 0) 75%),
    linear-gradient(100deg, #e398aa 0, rgba(110, 72, 85, 0.9) 60px, rgba(60, 40, 48, 0) 130px),
    linear-gradient(260deg, #d58da1 0, rgba(120, 80, 92, 0.9) 70px, rgba(60, 40, 48, 0) 130px),
    linear-gradient(#3c2a32, #a87080);
}
.dock {
  width: 2404px;
  height: 94px;
  display: flex;
  padding: 0 6px;
  border-radius: 8px 8px 0 0;
  background: linear-gradient(90deg, rgba(232, 160, 178, 0) 60%, rgba(232, 160, 178, 0.6) 85%), linear-gradient(#b98290, #d38ea3);
  box-shadow: inset 0 0 0 1px rgba(255, 255, 255, 0.15);
}
.cell {
  position: relative;
  width: 76px;
  height: 94px;
  flex: none;
}
.cell svg {
  width: 76px;
  height: 94px;
}
.running {
  position: absolute;
  left: 34px;
  top: 82px;
  width: 8px;
  height: 8px;
  border-radius: 50%;
  background: #56131f;
}
.badge {
  position: absolute;
  left: 46px;
  top: 7px;
  width: 27px;
  height: 27px;
  border-radius: 50%;
  background: #fa423f;
  box-shadow: 0 1px 2px rgba(0, 0, 0, 0.3);
  color: #fff;
  font-size: 18px;
  line-height: 27px;
  text-align: center;
}
.divider {
  width: 2px;
  height: 70px;
  margin: 12px 17px 0;
  background: #b56e82;
  flex: none;
}
</style>
